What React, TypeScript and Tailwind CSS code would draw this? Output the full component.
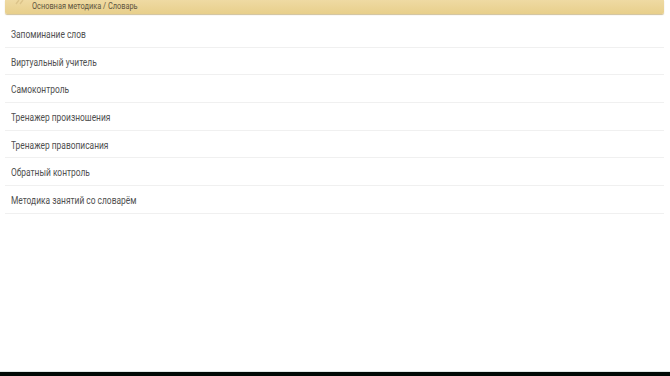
import React from "react";

const items = [
  "Запоминание слов",
  "Виртуальный учитель",
  "Самоконтроль",
  "Тренажер произношения",
  "Тренажер правописания",
  "Обратный контроль",
  "Методика занятий со словарём",
];

export default function App() {
  return (
    <div className="w-[670px] h-[376px] bg-white flex flex-col overflow-hidden" style={{ fontFamily: "Roboto, 'Noto Sans', sans-serif" }}>
      <div className="flex-1 flex flex-col">
        <div className="ml-[5px] mr-[6px] h-[14px] bg-gradient-to-b from-[#efdaa3] to-[#e8cf8b] shadow-[0_1px_1px_rgba(170,140,70,0.55)] rounded-b-[2px] flex items-start">
          <svg className="ml-[8px] w-[19px] h-[6px] shrink-0" viewBox="0 0 19 6">
            <path d="M6 0 L3 4 M10 0 L7 4" stroke="#dcc48a" strokeWidth="1.4" fill="none" />
          </svg>
          <span className="mt-[1px] text-[9px] text-[#5e5540] leading-[10px] origin-left scale-x-[0.82] whitespace-nowrap">Основная методика / Словарь</span>
        </div>
        <div className="mt-[6px] ml-[5px] mr-[6px] flex flex-col">
          {items.map((t) => (
            <div key={t} className="h-[27.7px] flex items-center pl-[6px] pt-[2px] border-b border-[#f0f0f0]">
              <span className="text-[10px] text-[#4f4f4f] origin-left scale-x-[0.84] whitespace-nowrap">{t}</span>
            </div>
          ))}
        </div>
      </div>
      <div className="h-[1px] bg-[#dfe6e4]" />
      <div className="h-[4px] bg-[#020a06]" />
    </div>
  );
}
